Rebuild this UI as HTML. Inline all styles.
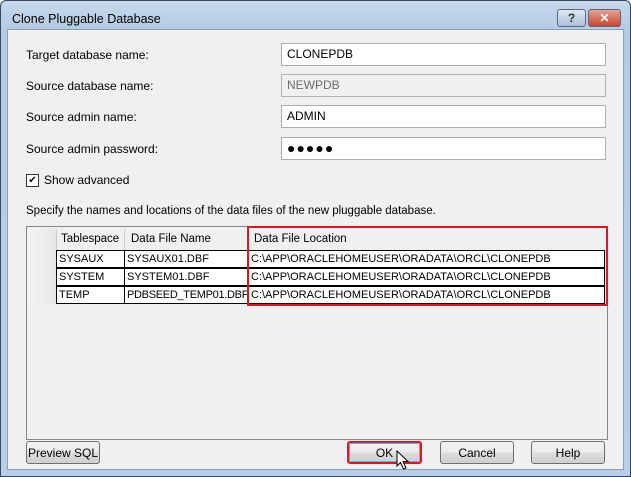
<!DOCTYPE html><html><head><style>
body{margin:0;width:631px;height:477px;overflow:hidden;background:#fff;font-family:"Liberation Sans",sans-serif;font-size:12px;color:#000}
.win{position:absolute;left:0;top:0;width:629px;height:475px;border:1px solid #3a4a5c;border-radius:6px 6px 0 0;background:linear-gradient(#c5d8ec,#b4cbe4 30px,#b9cfe7)}
.title{position:absolute;left:11px;top:11px;font-size:12.5px;color:#000}
.content{position:absolute;left:7px;top:29px;width:615px;height:439px;background:#f0f0f0;border:1px solid #8aa0b8}
.l{position:absolute;left:26px}
.in{position:absolute;left:281px;border:1px solid #abadb3;background:#fff;line-height:21px;padding-left:5px;box-sizing:border-box;width:325px;height:23px}
.btn{position:absolute;top:441px;height:23px;border:1px solid #707070;border-radius:3px;background:linear-gradient(#f2f2f2,#ebebeb 50%,#dddddd 51%,#cfcfcf);text-align:center;line-height:22px;box-sizing:border-box}
.tb{position:absolute;font-size:11.5px}
.c{position:absolute;height:18px;line-height:17px;padding-left:2px;box-sizing:border-box;border:1px solid #000;background:#fff;white-space:nowrap;overflow:hidden;font-size:11px}
.tbtn{position:absolute;top:8px;width:29px;height:18px;border:1px solid #5a6a7c;border-radius:3px;box-sizing:border-box;text-align:center;color:#fff;font-weight:bold;line-height:16px}
</style></head><body>
<div class="win">
<div class="title">Clone Pluggable Database</div>
<div class="tbtn" style="left:556px;background:linear-gradient(#dfe9f5,#a9bfd8);color:#333">?</div>
<div class="tbtn" style="left:587px;width:33px;background:linear-gradient(#e7a394,#c8452e);">✕</div>
</div>
<div class="content"></div>
<div class="l" style="top:48px">Target database name:</div>
<div class="l" style="top:79px">Source database name:</div>
<div class="l" style="top:110px">Source admin name:</div>
<div class="l" style="top:142px">Source admin password:</div>
<div class="in" style="top:43px">CLONEPDB</div>
<div class="in" style="top:74px;background:#f0f0f0;color:#6d6d6d;border-color:#adb2b5">NEWPDB</div>
<div class="in" style="top:105px">ADMIN</div>
<div class="in" style="top:137px;font-size:14px;letter-spacing:1px">●●●●●</div>
<div style="position:absolute;left:26px;top:174px;width:11px;height:11px;border:1px solid #333;background:#fff;font-size:10px;line-height:11px;text-align:center">✔</div>
<div style="position:absolute;left:44px;top:173px">Show advanced</div>
<div class="l" style="top:205px;font-size:11.5px">Specify the names and locations of the data files of the new pluggable database.</div>
<div style="position:absolute;left:26px;top:226px;width:580px;height:212px;border:1px solid #828790;background:#f0f0f0"></div>
<div style="position:absolute;left:28px;top:228px;width:28px;height:76px;background:linear-gradient(90deg,#f4f4f4,#e6e6e6)"></div>
<div class="tb" style="left:61px;top:233px">Tablespace</div>
<div class="tb" style="left:131px;top:233px">Data File Name</div>
<div class="tb" style="left:254px;top:233px">Data File Location</div>
<div style="position:absolute;left:124px;top:229px;width:1px;height:21px;background:#ccc"></div>
<div style="position:absolute;left:56px;top:229px;width:1px;height:21px;background:#ccc"></div>
<div class="c" style="left:56px;top:250px;width:69px">SYSAUX</div>
<div class="c" style="left:124px;top:250px;width:125px">SYSAUX01.DBF</div>
<div class="c" style="left:248px;top:250px;width:357px">C:\APP\ORACLEHOMEUSER\ORADATA\ORCL\CLONEPDB</div>
<div class="c" style="left:56px;top:268px;width:69px">SYSTEM</div>
<div class="c" style="left:124px;top:268px;width:125px">SYSTEM01.DBF</div>
<div class="c" style="left:248px;top:268px;width:357px">C:\APP\ORACLEHOMEUSER\ORADATA\ORCL\CLONEPDB</div>
<div class="c" style="left:56px;top:286px;width:69px">TEMP</div>
<div class="c" style="left:124px;top:286px;width:125px;letter-spacing:-0.3px">PDBSEED_TEMP01.DBF</div>
<div class="c" style="left:248px;top:286px;width:357px">C:\APP\ORACLEHOMEUSER\ORADATA\ORCL\CLONEPDB</div>
<div style="position:absolute;left:247px;top:226px;width:357px;height:76px;border:2px solid #e8121b"></div>
<div class="btn" style="left:26px;width:74px">Preview SQL</div>
<div class="btn" style="left:347px;width:75px;border:2px solid #e8121b;line-height:20px;box-shadow:inset 0 0 0 1px #3cc7f0">OK</div>
<div class="btn" style="left:440px;width:74px">Cancel</div>
<div class="btn" style="left:531px;width:74px">Help</div>
<svg style="position:absolute;left:396px;top:450px" width="16" height="22" viewBox="0 0 16 22"><path d="M1 1V16L4.5 12.5L7.5 19L10 18L7 11.5H12Z" fill="#fff" stroke="#000"/></svg>
</body></html>
